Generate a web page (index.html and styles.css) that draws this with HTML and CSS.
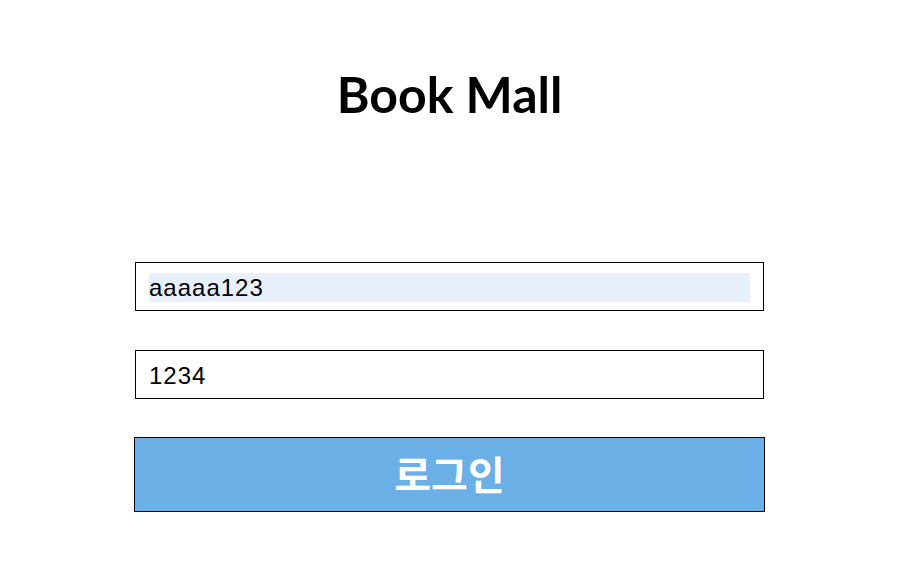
FILE: index.html
```html
<!DOCTYPE html>
<html lang="ko">
<head>
<meta charset="utf-8">
<title>Book Mall</title>
<link rel="stylesheet" href="styles.css">
</head>
<body>
<main class="login">
  <h1 class="title">Book Mall</h1>
  <form class="form">
    <div class="field field-id"><input class="input input-filled" type="text" value="aaaaa123"></div>
    <div class="field"><input class="input" type="text" value="1234"></div>
    <button class="btn" type="button">로그인</button>
  </form>
</main>
</body>
</html>
```

FILE: styles.css
```css
html, body {
  margin: 0;
  padding: 0;
  background: #ffffff;
}
.login {
  width: 631px;
  margin-left: 134px;
  display: flex;
  flex-direction: column;
}
.title {
  margin: 64px 0 0 0;
  height: 60px;
  line-height: 60px;
  text-align: center;
  font-family: "Lato", "Noto Sans CJK KR", sans-serif;
  font-weight: 700;
  font-size: 50px;
  color: #000;
}
.form {
  margin-top: 138px;
  display: flex;
  flex-direction: column;
}
.field {
  margin: 0 1px 39px 1px;
  border: 1px solid #000;
  padding: 10px 13px 8px 13px;
}
.input {
  display: block;
  width: 100%;
  box-sizing: border-box;
  height: 29px;
  border: none;
  outline: none;
  padding: 0;
  margin: 0;
  background: transparent;
  font-family: "Liberation Sans", Arial, sans-serif;
  font-size: 24px;
  letter-spacing: 1px;
  color: #000;
}
.input-filled {
  background: #e8f0fe;
}
.btn {
  margin-top: -1px;
  height: 75px;
  border: 1px solid #000;
  background: #6aafe6;
  color: #fff;
  font-family: "Noto Sans CJK KR", sans-serif;
  font-weight: 700;
  font-size: 40px;
  line-height: 1;
  padding: 0 0 4px 0;
  cursor: pointer;
}
```
